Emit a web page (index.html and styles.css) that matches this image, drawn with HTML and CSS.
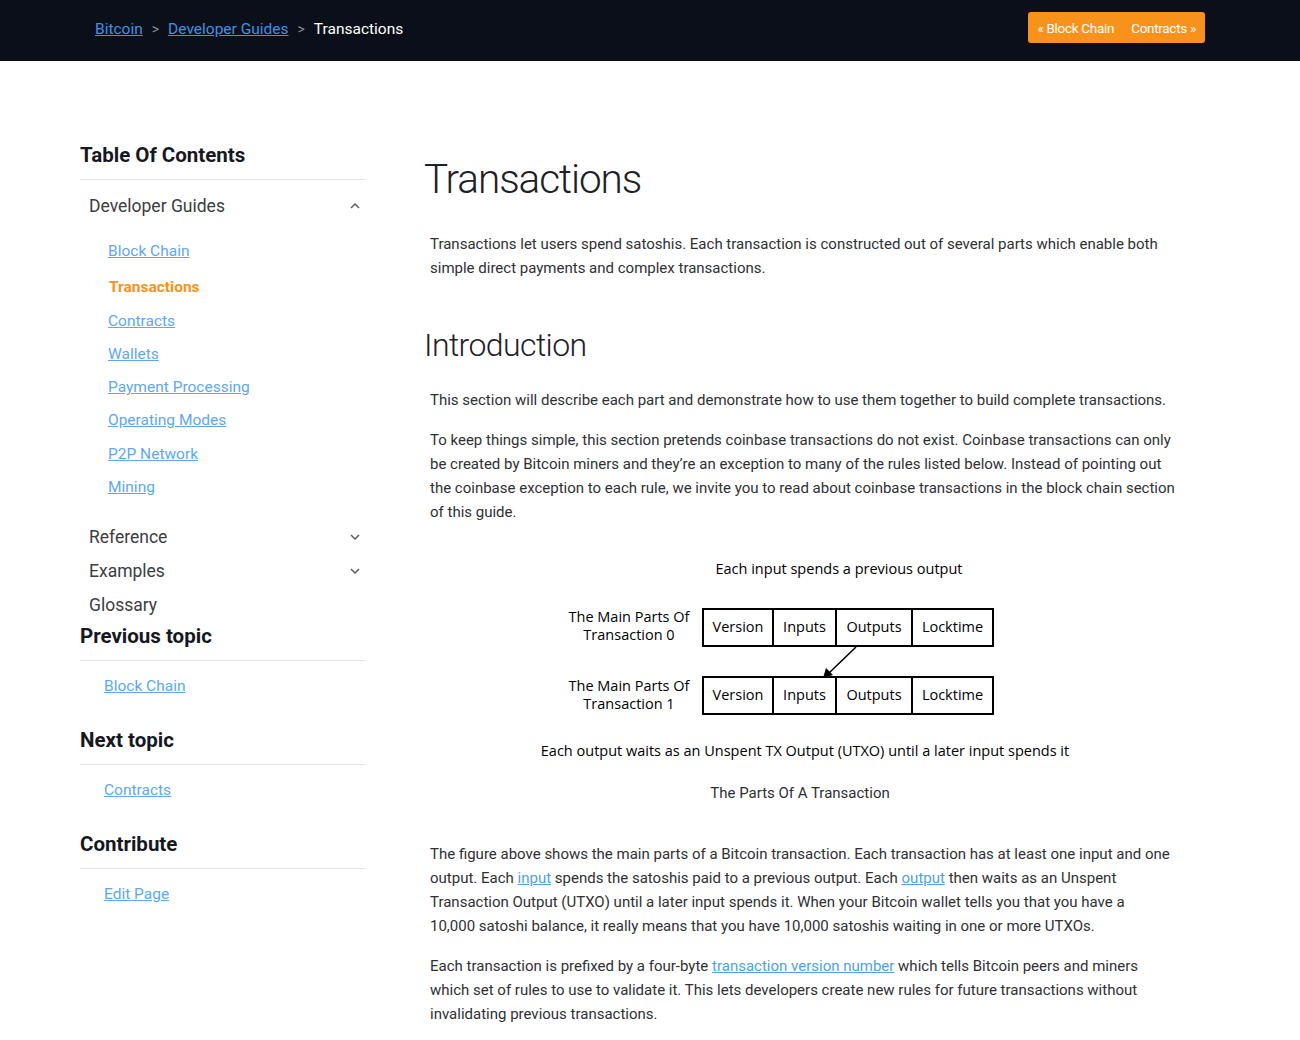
FILE: index.html
```html
<!DOCTYPE html>
<html lang="en">
<head>
    <meta charset="UTF-8">
    <meta name="viewport" content="width=device-width, initial-scale=1.0">
    <title>Transactions - Developer Guides</title>
    <link rel="stylesheet" href="styles.css">
</head>
<body>
    <header class="topbar">
        <nav class="crumbs">
            <a href="#">Bitcoin</a>
            <span class="sep">&gt;</span>
            <a href="#">Developer Guides</a>
            <span class="sep">&gt;</span>
            <span class="current">Transactions</span>
        </nav>
        <div class="pager">
            <a href="#">&laquo; Block Chain</a>
            <a href="#">Contracts &raquo;</a>
        </div>
    </header>

    <div class="page">
        <aside class="sidebar">
            <h3 class="side-title">Table Of Contents</h3>
            <ul class="toc">
                <li class="toc-group">
                    <div class="toc-head">Developer Guides
                        <svg class="chev" width="10" height="6" viewBox="0 0 10 6"><path d="M1 5 L5 1 L9 5" /></svg>
                    </div>
                    <ul class="toc-sub">
                        <li><a href="#">Block Chain</a></li>
                        <li class="active">Transactions</li>
                        <li><a href="#">Contracts</a></li>
                        <li><a href="#">Wallets</a></li>
                        <li><a href="#">Payment Processing</a></li>
                        <li><a href="#">Operating Modes</a></li>
                        <li><a href="#">P2P Network</a></li>
                        <li><a href="#">Mining</a></li>
                    </ul>
                </li>
                <li class="toc-group spaced">
                    <div class="toc-head">Reference
                        <svg class="chev" width="10" height="6" viewBox="0 0 10 6"><path d="M1 1 L5 5 L9 1" /></svg>
                    </div>
                </li>
                <li class="toc-group">
                    <div class="toc-head">Examples
                        <svg class="chev" width="10" height="6" viewBox="0 0 10 6"><path d="M1 1 L5 5 L9 1" /></svg>
                    </div>
                </li>
                <li class="toc-group">
                    <div class="toc-head">Glossary</div>
                </li>
            </ul>

            <h3 class="side-title">Previous topic</h3>
            <p class="side-link"><a href="#">Block Chain</a></p>

            <h3 class="side-title">Next topic</h3>
            <p class="side-link"><a href="#">Contracts</a></p>

            <h3 class="side-title">Contribute</h3>
            <p class="side-link"><a href="#">Edit Page</a></p>
        </aside>

        <main class="content">
            <h1>Transactions</h1>
            <p class="lead">Transactions let users spend satoshis. Each transaction is constructed out of several parts which enable both simple direct payments and complex transactions.</p>

            <h2>Introduction</h2>
            <p>This section will describe each part and demonstrate how to use them together to build complete transactions.</p>
            <p>To keep things simple, this section pretends coinbase transactions do not exist. Coinbase transactions can only be created by Bitcoin miners and they’re an exception to many of the rules listed below. Instead of pointing out the coinbase exception to each rule, we invite you to read about coinbase transactions in the block chain section of this guide.</p>

            <figure class="figure">
                <svg class="tx-diagram" width="560" height="216" viewBox="0 0 560 216">
                    <g class="labels">
                        <text x="319" y="23" text-anchor="middle">Each input spends a previous output</text>
                        <text x="109" y="71" text-anchor="middle">The Main Parts Of</text>
                        <text x="109" y="89" text-anchor="middle">Transaction 0</text>
                        <text x="109" y="140" text-anchor="middle">The Main Parts Of</text>
                        <text x="109" y="158" text-anchor="middle">Transaction 1</text>
                        <text x="285" y="205" text-anchor="middle">Each output waits as an Unspent TX Output (UTXO) until a later input spends it</text>
                    </g>
                    <g class="cells">
                        <rect x="183" y="58" width="70" height="37" />
                        <rect x="253" y="58" width="63" height="37" />
                        <rect x="316" y="58" width="76" height="37" />
                        <rect x="392" y="58" width="81" height="37" />
                        <rect x="183" y="126" width="70" height="37" />
                        <rect x="253" y="126" width="63" height="37" />
                        <rect x="316" y="126" width="76" height="37" />
                        <rect x="392" y="126" width="81" height="37" />
                    </g>
                    <g class="labels">
                        <text x="218" y="81" text-anchor="middle">Version</text>
                        <text x="284.5" y="81" text-anchor="middle">Inputs</text>
                        <text x="354" y="81" text-anchor="middle">Outputs</text>
                        <text x="432.5" y="81" text-anchor="middle">Locktime</text>
                        <text x="218" y="149" text-anchor="middle">Version</text>
                        <text x="284.5" y="149" text-anchor="middle">Inputs</text>
                        <text x="354" y="149" text-anchor="middle">Outputs</text>
                        <text x="432.5" y="149" text-anchor="middle">Locktime</text>
                    </g>
                    <line class="arrow" x1="336" y1="96" x2="309" y2="122" />
                    <path class="arrow-head" d="M303 127 L306 117 L313 124 Z" />
                </svg>
                <figcaption>The Parts Of A Transaction</figcaption>
            </figure>

            <p>The figure above shows the main parts of a Bitcoin transaction. Each transaction has at least one input and one output. Each <a href="#">input</a> spends the satoshis paid to a previous output. Each <a href="#">output</a> then waits as an Unspent Transaction Output (UTXO) until a later input spends it. When your Bitcoin wallet tells you that you have a 10,000&nbsp;satoshi balance, it really means that you have 10,000 satoshis waiting in one or more UTXOs.</p>
            <p>Each transaction is prefixed by a four-byte <a href="#">transaction version number</a> which tells Bitcoin peers and miners which set of rules to use to validate it. This lets developers create new rules for future transactions without invalidating previous transactions.</p>
        </main>
    </div>
</body>
</html>
```

FILE: styles.css
```css
html, body {
    margin: 0;
    padding: 0;
}

body {
    background: #ffffff;
    color: #2f3033;
    font-family: Roboto, 'Noto Sans', sans-serif;
}

a {
    color: #4f9fe9;
}

/* Top bar */
.topbar {
    box-sizing: border-box;
    height: 61px;
    background: #0b0f1a;
    display: flex;
    justify-content: space-between;
    align-items: flex-start;
    padding: 12px 95px 0;
}

.crumbs {
    font-size: 15.5px;
    line-height: 31px;
    padding-top: 2px;
    display: flex;
    align-items: center;
}

.crumbs a {
    color: #3f92e4;
}

.crumbs .sep {
    color: #8a8d94;
    margin: 0 9px;
    font-size: 14px;
}

.crumbs .current {
    color: #ffffff;
}

.pager {
    display: flex;
    background: #f7931a;
    border-radius: 3px;
    height: 31px;
    align-items: center;
    padding: 0 9px 0 9px;
    gap: 17px;
}

.pager a {
    color: #ffffff;
    text-decoration: none;
    font-size: 13.5px;
    letter-spacing: -0.3px;
}

/* Layout */
.page {
    display: flex;
    padding: 80px 0 0 80px;
    gap: 59px;
}

.sidebar {
    width: 285px;
    flex-shrink: 0;
}

.content {
    width: 752px;
    padding-top: 13px;
}

/* Sidebar */
.side-title {
    margin: 0;
    font-size: 20.5px;
    font-weight: 700;
    line-height: 28px;
    color: #161821;
    padding-bottom: 10px;
    border-bottom: 1px solid #e6e6e6;
}

.toc {
    list-style: none;
    margin: 9px 0 0;
    padding: 0;
}

.toc-head {
    display: flex;
    justify-content: space-between;
    align-items: center;
    padding: 0 5px 0 9px;
    line-height: 34px;
    font-size: 17.5px;
    color: #3c3d42;
}

.chev {
    fill: none;
    stroke: #5b5d63;
    stroke-width: 1.5;
}

.toc-sub {
    list-style: none;
    margin: 12px 0 0;
    padding: 0 0 0 28px;
}

.toc-sub li {
    line-height: 33.3px;
    font-size: 15.5px;
}

.toc-sub a {
    color: #5ea8ef;
}

.toc-sub li.active {
    color: #f7931a;
    font-weight: 700;
    padding-left: 1px;
    margin-top: 3px;
}

.toc-group.spaced {
    margin-top: 16px;
}

.side-link {
    margin: 13px 0 28px;
    padding-left: 24px;
    line-height: 24px;
    font-size: 15.5px;
}

.side-link a {
    color: #5ea8ef;
}

/* Article */
.content h1 {
    margin: 0;
    font-size: 40.5px;
    font-weight: 300;
    line-height: 50px;
    color: #1f2027;
    letter-spacing: -1.1px;
}

.content h2 {
    margin: 45px 0 0;
    font-size: 32px;
    font-weight: 300;
    line-height: 40px;
    color: #1f2027;
    letter-spacing: -0.6px;
}

.content p {
    margin: 16px 0 0 6px;
    font-size: 15px;
    line-height: 24px;
}

.content p.lead {
    margin-top: 28px;
}

.content h2 + p {
    margin-top: 23px;
}

.content p a {
    color: #4f9fe9;
}

/* Transaction diagram */
.figure {
    margin: 27px 0 0 0;
    display: flex;
    flex-direction: column;
    align-items: center;
}

.tx-diagram .labels text {
    font-family: 'Open Sans', 'Noto Sans', sans-serif;
    font-size: 14.5px;
    fill: #000000;
}

.tx-diagram .cells rect {
    fill: #ffffff;
    stroke: #000000;
    stroke-width: 2;
}

.tx-diagram .arrow {
    stroke: #000000;
    stroke-width: 1.6;
}

.tx-diagram .arrow-head {
    fill: #000000;
}

.figure figcaption {
    margin-top: 14px;
    font-size: 15px;
    line-height: 24px;
    color: #2f3033;
}

.figure + p {
    margin-top: 37px;
}
```
